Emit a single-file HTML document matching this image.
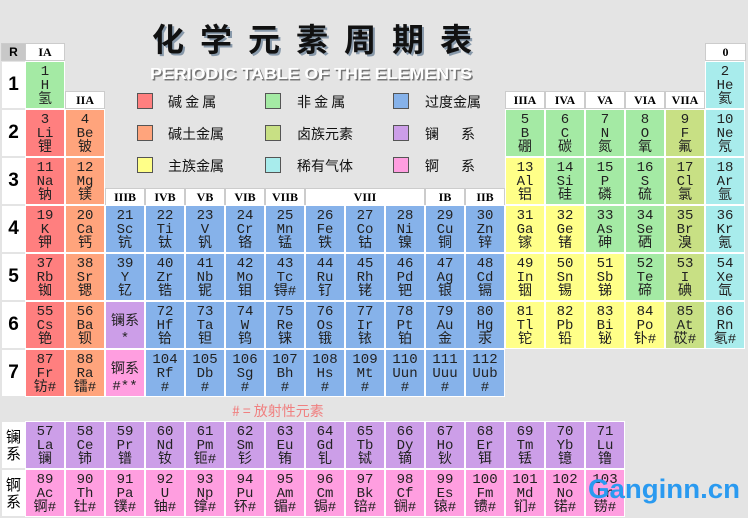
<!DOCTYPE html>
<html><head><meta charset="utf-8"><style>
body{margin:0;width:748px;height:518px;background:#e4e4e4;position:relative;overflow:hidden;font-family:"Liberation Mono","Noto Sans CJK SC",monospace}
.g{position:absolute;left:26px;display:grid;grid-template-columns:repeat(18,38px);column-gap:2px;row-gap:2px;grid-auto-rows:46px}
.g div{outline:1px solid #fff;text-align:center;font-size:14px;line-height:14px;padding-top:3px;box-sizing:border-box;color:#222}
.a{background:#ff7f7f}.e{background:#ffa47c}.t{background:#86b2ea}.n{background:#a4eaa4}.h{background:#c8e084}.o{background:#a8ecec}.m{background:#ffff88}.l{background:#cc9ee8}.c{background:#ff9ee0}
.hd{position:absolute;background:#fff;text-align:center;font:bold 12px "Liberation Serif",serif;line-height:16px;height:16px;outline:1px solid #ccc}
.rl{position:absolute;left:2px;width:23px;height:46px;background:#fff;font:bold 19px "Liberation Sans",sans-serif;line-height:46px;text-align:center}
.sw{position:absolute;width:14px;height:14px;border:1px solid #555}
.lt{position:absolute;font:14px "Noto Sans CJK SC",sans-serif;line-height:16px;color:#111}
.vl{position:absolute;left:2px;width:23px;height:46px;background:#fff;font:15px "Noto Sans CJK SC",sans-serif;line-height:17px;text-align:center;padding-top:6px;box-sizing:border-box}
</style></head><body>
<svg style="position:absolute;left:0;top:0" width="748" height="90">
<text x="152" y="51" textLength="320" font-family="Noto Sans CJK SC,sans-serif" font-size="32" font-weight="bold" fill="#8899aa" transform="translate(2,2)">化 学 元 素 周 期 表</text>
<text x="152" y="51" textLength="320" font-family="Noto Sans CJK SC,sans-serif" font-size="32" font-weight="bold" fill="#111">化 学 元 素 周 期 表</text>
<text x="150" y="79" textLength="322" lengthAdjust="spacingAndGlyphs" font-family="Liberation Sans,sans-serif" font-size="16" font-weight="bold" fill="#777" transform="translate(1.5,1.5)">PERIODIC TABLE OF THE ELEMENTS</text>
<text x="150" y="79" textLength="322" lengthAdjust="spacingAndGlyphs" font-family="Liberation Sans,sans-serif" font-size="16" font-weight="bold" fill="#fff">PERIODIC TABLE OF THE ELEMENTS</text>
</svg>
<div class="sw a" style="left:137px;top:93px"></div><div class="lt" style="left:168px;top:94px">碱 金 属</div>
<div class="sw e" style="left:137px;top:125px"></div><div class="lt" style="left:168px;top:126px">碱土金属</div>
<div class="sw m" style="left:137px;top:157px"></div><div class="lt" style="left:168px;top:158px">主族金属</div>
<div class="sw n" style="left:265px;top:93px"></div><div class="lt" style="left:297px;top:94px">非 金 属</div>
<div class="sw h" style="left:265px;top:125px"></div><div class="lt" style="left:297px;top:126px">卤族元素</div>
<div class="sw o" style="left:265px;top:157px"></div><div class="lt" style="left:297px;top:158px">稀有气体</div>
<div class="sw t" style="left:393px;top:93px"></div><div class="lt" style="left:425px;top:94px">过度金属</div>
<div class="sw l" style="left:393px;top:125px"></div><div class="lt" style="left:425px;top:126px">镧&nbsp;&nbsp;&nbsp;&nbsp;&nbsp;&nbsp;&nbsp;系</div>
<div class="sw c" style="left:393px;top:157px"></div><div class="lt" style="left:425px;top:158px">锕&nbsp;&nbsp;&nbsp;&nbsp;&nbsp;&nbsp;&nbsp;系</div>

<div class="hd" style="left:2px;top:44px;width:23px;background:#c8c8c8;font-family:'Liberation Sans';">R</div>
<div class="hd" style="left:26px;top:44px;width:38px">IA</div>
<div class="hd" style="left:706px;top:44px;width:39px">0</div>
<div class="hd" style="left:66px;top:92px;width:38px">IIA</div>
<div class="hd" style="left:506px;top:92px;width:38px">IIIA</div>
<div class="hd" style="left:546px;top:92px;width:38px">IVA</div>
<div class="hd" style="left:586px;top:92px;width:38px">VA</div>
<div class="hd" style="left:626px;top:92px;width:38px">VIA</div>
<div class="hd" style="left:666px;top:92px;width:38px">VIIA</div>
<div class="hd" style="left:106px;top:189px;width:38px">IIIB</div>
<div class="hd" style="left:146px;top:189px;width:38px">IVB</div>
<div class="hd" style="left:186px;top:189px;width:38px">VB</div>
<div class="hd" style="left:226px;top:189px;width:38px">VIB</div>
<div class="hd" style="left:266px;top:189px;width:38px">VIIB</div>
<div class="hd" style="left:306px;top:189px;width:118px">VIII</div>
<div class="hd" style="left:426px;top:189px;width:38px">IB</div>
<div class="hd" style="left:466px;top:189px;width:38px">IIB</div>

<div class="rl" style="top:62px">1</div><div class="rl" style="top:110px">2</div><div class="rl" style="top:158px">3</div><div class="rl" style="top:206px">4</div><div class="rl" style="top:254px">5</div><div class="rl" style="top:302px">6</div><div class="rl" style="top:350px">7</div>
<div class="vl" style="top:422px">镧<br>系</div><div class="vl" style="top:470px">锕<br>系</div>

<div class="g" style="top:62px">
<div class="n" style="grid-area:1/1">1<br>H<br>氢</div><div class="o" style="grid-area:1/18">2<br>He<br>氦</div>
<div class="a" style="grid-area:2/1">3<br>Li<br>锂</div><div class="e" style="grid-area:2/2">4<br>Be<br>铍</div>
<div class="n" style="grid-area:2/13">5<br>B<br>硼</div><div class="n" style="grid-area:2/14">6<br>C<br>碳</div><div class="n" style="grid-area:2/15">7<br>N<br>氮</div><div class="n" style="grid-area:2/16">8<br>O<br>氧</div><div class="h" style="grid-area:2/17">9<br>F<br>氟</div><div class="o" style="grid-area:2/18">10<br>Ne<br>氖</div>
<div class="a" style="grid-area:3/1">11<br>Na<br>钠</div><div class="e" style="grid-area:3/2">12<br>Mg<br>镁</div>
<div class="m" style="grid-area:3/13">13<br>Al<br>铝</div><div class="n" style="grid-area:3/14">14<br>Si<br>硅</div><div class="n" style="grid-area:3/15">15<br>P<br>磷</div><div class="n" style="grid-area:3/16">16<br>S<br>硫</div><div class="h" style="grid-area:3/17">17<br>Cl<br>氯</div><div class="o" style="grid-area:3/18">18<br>Ar<br>氩</div>
<div class="a" style="grid-area:4/1">19<br>K<br>钾</div><div class="e" style="grid-area:4/2">20<br>Ca<br>钙</div>
<div class="t" style="grid-area:4/3">21<br>Sc<br>钪</div><div class="t" style="grid-area:4/4">22<br>Ti<br>钛</div><div class="t" style="grid-area:4/5">23<br>V<br>钒</div><div class="t" style="grid-area:4/6">24<br>Cr<br>铬</div><div class="t" style="grid-area:4/7">25<br>Mn<br>锰</div><div class="t" style="grid-area:4/8">26<br>Fe<br>铁</div><div class="t" style="grid-area:4/9">27<br>Co<br>钴</div><div class="t" style="grid-area:4/10">28<br>Ni<br>镍</div><div class="t" style="grid-area:4/11">29<br>Cu<br>铜</div><div class="t" style="grid-area:4/12">30<br>Zn<br>锌</div>
<div class="m" style="grid-area:4/13">31<br>Ga<br>镓</div><div class="m" style="grid-area:4/14">32<br>Ge<br>锗</div><div class="n" style="grid-area:4/15">33<br>As<br>砷</div><div class="n" style="grid-area:4/16">34<br>Se<br>硒</div><div class="h" style="grid-area:4/17">35<br>Br<br>溴</div><div class="o" style="grid-area:4/18">36<br>Kr<br>氪</div>
<div class="a" style="grid-area:5/1">37<br>Rb<br>铷</div><div class="e" style="grid-area:5/2">38<br>Sr<br>锶</div>
<div class="t" style="grid-area:5/3">39<br>Y<br>钇</div><div class="t" style="grid-area:5/4">40<br>Zr<br>锆</div><div class="t" style="grid-area:5/5">41<br>Nb<br>铌</div><div class="t" style="grid-area:5/6">42<br>Mo<br>钼</div><div class="t" style="grid-area:5/7">43<br>Tc<br>锝#</div><div class="t" style="grid-area:5/8">44<br>Ru<br>钌</div><div class="t" style="grid-area:5/9">45<br>Rh<br>铑</div><div class="t" style="grid-area:5/10">46<br>Pd<br>钯</div><div class="t" style="grid-area:5/11">47<br>Ag<br>银</div><div class="t" style="grid-area:5/12">48<br>Cd<br>镉</div>
<div class="m" style="grid-area:5/13">49<br>In<br>铟</div><div class="m" style="grid-area:5/14">50<br>Sn<br>锡</div><div class="m" style="grid-area:5/15">51<br>Sb<br>锑</div><div class="n" style="grid-area:5/16">52<br>Te<br>碲</div><div class="h" style="grid-area:5/17">53<br>I<br>碘</div><div class="o" style="grid-area:5/18">54<br>Xe<br>氙</div>
<div class="a" style="grid-area:6/1">55<br>Cs<br>铯</div><div class="e" style="grid-area:6/2">56<br>Ba<br>钡</div><div class="l" style="grid-area:6/3;padding-top:12px;line-height:17px">镧系<br>*</div>
<div class="t" style="grid-area:6/4">72<br>Hf<br>铪</div><div class="t" style="grid-area:6/5">73<br>Ta<br>钽</div><div class="t" style="grid-area:6/6">74<br>W<br>钨</div><div class="t" style="grid-area:6/7">75<br>Re<br>铼</div><div class="t" style="grid-area:6/8">76<br>Os<br>锇</div><div class="t" style="grid-area:6/9">77<br>Ir<br>铱</div><div class="t" style="grid-area:6/10">78<br>Pt<br>铂</div><div class="t" style="grid-area:6/11">79<br>Au<br>金</div><div class="t" style="grid-area:6/12">80<br>Hg<br>汞</div>
<div class="m" style="grid-area:6/13">81<br>Tl<br>铊</div><div class="m" style="grid-area:6/14">82<br>Pb<br>铅</div><div class="m" style="grid-area:6/15">83<br>Bi<br>铋</div><div class="m" style="grid-area:6/16">84<br>Po<br>钋#</div><div class="h" style="grid-area:6/17">85<br>At<br>砹#</div><div class="o" style="grid-area:6/18">86<br>Rn<br>氡#</div>
<div class="a" style="grid-area:7/1">87<br>Fr<br>钫#</div><div class="e" style="grid-area:7/2">88<br>Ra<br>镭#</div><div class="c" style="grid-area:7/3;padding-top:12px;line-height:17px">锕系<br>#**</div>
<div class="t" style="grid-area:7/4">104<br>Rf<br>#</div><div class="t" style="grid-area:7/5">105<br>Db<br>#</div><div class="t" style="grid-area:7/6">106<br>Sg<br>#</div><div class="t" style="grid-area:7/7">107<br>Bh<br>#</div><div class="t" style="grid-area:7/8">108<br>Hs<br>#</div><div class="t" style="grid-area:7/9">109<br>Mt<br>#</div><div class="t" style="grid-area:7/10">110<br>Uun<br>#</div><div class="t" style="grid-area:7/11">111<br>Uuu<br>#</div><div class="t" style="grid-area:7/12">112<br>Uub<br>#</div>
</div>

<div style="position:absolute;left:232px;top:401px;font:14px 'Noto Sans CJK SC',sans-serif;color:#f08080">#&nbsp;=&nbsp;放射性元素</div>

<div class="g" style="top:422px">
<div class="l">57<br>La<br>镧</div><div class="l">58<br>Ce<br>铈</div><div class="l">59<br>Pr<br>镨</div><div class="l">60<br>Nd<br>钕</div><div class="l">61<br>Pm<br>钷#</div><div class="l">62<br>Sm<br>钐</div><div class="l">63<br>Eu<br>铕</div><div class="l">64<br>Gd<br>钆</div><div class="l">65<br>Tb<br>铽</div><div class="l">66<br>Dy<br>镝</div><div class="l">67<br>Ho<br>钬</div><div class="l">68<br>Er<br>铒</div><div class="l">69<br>Tm<br>铥</div><div class="l">70<br>Yb<br>镱</div><div class="l">71<br>Lu<br>镥</div>
</div>
<div class="g" style="top:470px">
<div class="c">89<br>Ac<br>锕#</div><div class="c">90<br>Th<br>钍#</div><div class="c">91<br>Pa<br>镤#</div><div class="c">92<br>U<br>铀#</div><div class="c">93<br>Np<br>镎#</div><div class="c">94<br>Pu<br>钚#</div><div class="c">95<br>Am<br>镅#</div><div class="c">96<br>Cm<br>锔#</div><div class="c">97<br>Bk<br>锫#</div><div class="c">98<br>Cf<br>锎#</div><div class="c">99<br>Es<br>锿#</div><div class="c">100<br>Fm<br>镄#</div><div class="c">101<br>Md<br>钔#</div><div class="c">102<br>No<br>锘#</div><div class="c">103<br>Lr<br>铹#</div>
</div>
<svg style="position:absolute;left:580px;top:468px" width="168" height="40"><text x="8" y="30" textLength="152" lengthAdjust="spacingAndGlyphs" font-family="Liberation Sans,sans-serif" font-weight="bold" font-size="27" fill="#2a9af0">Ganginn.cn</text></svg>
</body></html>
